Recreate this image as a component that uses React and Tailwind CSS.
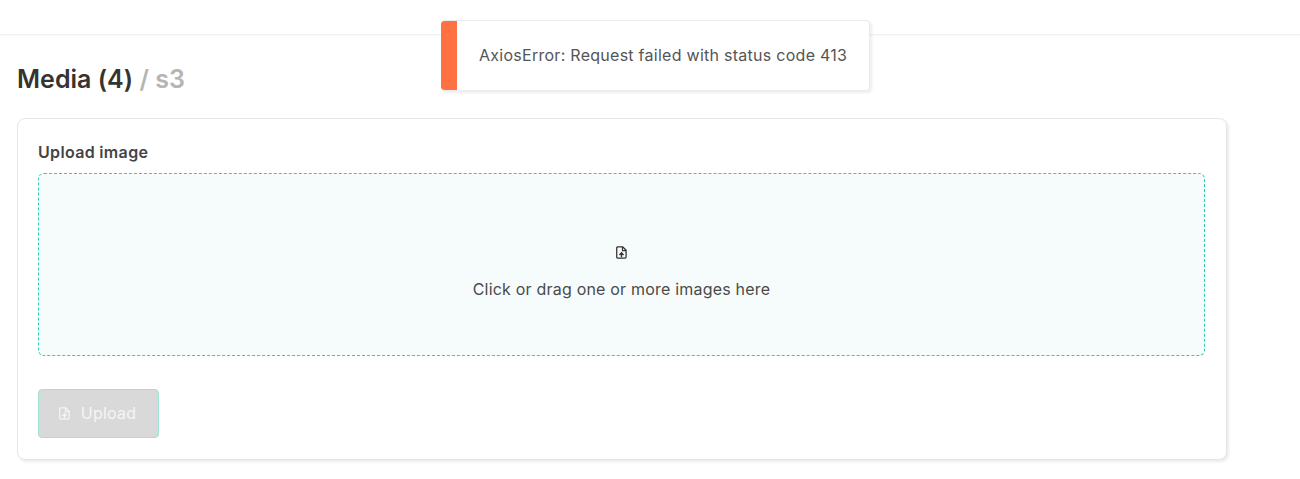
// Outline file with a folded corner and an arrow pointing up
const FileUploadIcon = ({ className }) => (
  <svg viewBox="0 0 12 14" className={className} fill="none" stroke="currentColor">
    <path d="M1.7 0.8H7.2L11 4.6V12a1.2 1.2 0 0 1-1.2 1.2H1.7A1.2 1.2 0 0 1 0.8 12V2a1.2 1.2 0 0 1 0.9-1.2Z" strokeWidth="1.4" strokeLinejoin="round" />
    <path d="M7 1V5H11" strokeWidth="1.2" />
    <path d="M6 12.2V7.8M3.8 9.8L6 7.4L8.2 9.8" strokeWidth="1.5" />
  </svg>
);

// Toast shown over the page when the upload request fails
const Toast = () => (
  <div className="absolute left-[441px] top-[20px] flex h-[71px] w-[429px] overflow-hidden rounded-[4px] border border-l-0 border-[#ebebeb] bg-white shadow-[2px_2px_3px_rgba(0,0,0,0.07)]">
    <div className="-my-px w-[16px] bg-[#ff7043]" />
    <div className="flex flex-1 items-center pb-[2px] pl-[22px] text-[16px] tracking-[0.27px] text-[#555555]">
      AxiosError: Request failed with status code 413
    </div>
  </div>
);

const App = () => {
  return (
    <div className="relative h-[479px] overflow-hidden bg-white font-['Inter',sans-serif]">
      <Toast />
      <div className="h-[35px] border-b border-[#f0f0f0] shadow-[0_1px_2px_rgba(0,0,0,0.03)]" />

      <div className="px-[17px]">
        <h1 className="mt-[27px] h-[34px] text-[25px] leading-[34px] font-semibold tracking-[0.02px] text-[#363330]">
          Media (4) <span className="text-[#b5b5b5]">/ s3</span>
        </h1>

        <div className="mt-[22px] h-[342px] w-[1210px] rounded-[8px] border border-[#e6e6e6] bg-white px-[20px] pt-[23px] shadow-[2px_2px_3px_rgba(0,0,0,0.08)]">
          <div className="h-[20px] text-[16px] leading-[20px] font-semibold tracking-[0.33px] text-[#444444]">Upload image</div>

          <div className="mt-[11px] flex h-[183px] w-[1167px] flex-col items-center rounded-[6px] border border-dashed border-[#2ccfb0] bg-[#f6fcfc] pt-[72px]">
            <FileUploadIcon className="h-[13px] w-[11px] text-[#363330]" />
            <div className="mt-[20px] h-[20px] text-[16px] leading-[20px] tracking-[0.2px] text-[#4a4a4a]">
              Click or drag one or more images here
            </div>
          </div>

          <button
            disabled
            className="mt-[33px] flex h-[49px] w-[121px] items-center justify-center gap-[11px] rounded-[4px] border border-[#9fe3d4] bg-[#d9d9d9] pr-[2px] pb-[2px] text-[16px] tracking-[0.2px] text-[#f5f5f5]"
          >
            <FileUploadIcon className="mt-[2px] h-[13px] w-[11px]" />
            Upload
          </button>
        </div>
      </div>
    </div>
  );
};

export default App;
